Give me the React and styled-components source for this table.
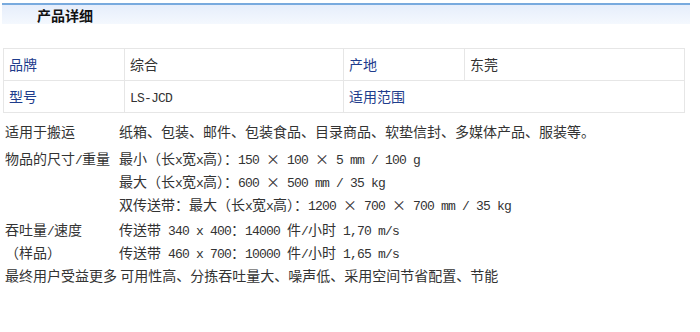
import React from "react";
import styled, { createGlobalStyle } from "styled-components";

const GlobalStyle = createGlobalStyle`
  body {
    margin: 0;
    background: #fff;
    font-family: "Noto Sans CJK SC", sans-serif;
    font-size: 14px;
    color: #333;
  }
`;

const Page = styled.div`
  width: 688px;
  padding: 3px 0 0 2px;
`;

const Header = styled.div`
  height: 19px;
  border-top: 2px solid #78aade;
  background: linear-gradient(#e6eefb, #f4f8fe);
  padding-left: 35px;
`;

const Title = styled.h3`
  margin: 0;
  font-size: 14px;
  line-height: 21px;
  font-weight: bold;
  color: #111;
`;

const Table = styled.table`
  margin: 24px 0 0 1px;
  width: 681px;
  border-collapse: collapse;
  table-layout: fixed;
`;

const Cell = styled.td`
  border: 1px solid #e6e6e6;
  height: 30px;
  padding: 0 0 1px 5px;
  line-height: 29px;
  color: ${(p) => (p.$label ? "#1e3c8c" : "#333")};
`;

const Num = styled.span`
  font-family: "Liberation Mono", monospace;
  font-size: 13px;
  letter-spacing: -0.8px;
  line-height: 1;
`;

const Specs = styled.div`
  margin-top: 7px;
  padding-left: 3px;
`;

const SpecRow = styled.div`
  display: grid;
  grid-template-columns: 114px 1fr;
  line-height: 23px;
  margin-top: ${(p) => p.$gap || 0}px;
`;

const Line = styled.div`
  white-space: nowrap;
`;

const Plain = styled.div`
  line-height: 23px;
  white-space: pre;
`;

export default function App() {
  return (
    <Page>
      <GlobalStyle />
      <Header>
        <Title>产品详细</Title>
      </Header>
      <Table>
        <colgroup>
          <col style={{ width: 121 }} />
          <col style={{ width: 219 }} />
          <col style={{ width: 121 }} />
          <col style={{ width: 220 }} />
        </colgroup>
        <tbody>
          <tr>
            <Cell $label>品牌</Cell>
            <Cell>综合</Cell>
            <Cell $label>产地</Cell>
            <Cell>东莞</Cell>
          </tr>
          <tr>
            <Cell $label>型号</Cell>
            <Cell>
              <Num>LS-JCD</Num>
            </Cell>
            <Cell $label colSpan={2}>
              适用范围
            </Cell>
          </tr>
        </tbody>
      </Table>
      <Specs>
        <SpecRow>
          <div>适用于搬运</div>
          <Line>纸箱、包装、邮件、包装食品、目录商品、软垫信封、多媒体产品、服装等。</Line>
        </SpecRow>
        <SpecRow $gap={4}>
          <div>
            物品的尺寸<Num>/</Num>重量
          </div>
          <div>
            <Line>
              最小（长<Num>x</Num>宽<Num>x</Num>高）：<Num>150 </Num>×<Num> 100 </Num>×
              <Num> 5 mm / 100 g</Num>
            </Line>
            <Line>
              最大（长<Num>x</Num>宽<Num>x</Num>高）：<Num>600 </Num>×<Num> 500 mm / 35 kg</Num>
            </Line>
            <Line>
              双传送带：最大（长<Num>x</Num>宽<Num>x</Num>高）：<Num>1200 </Num>×<Num> 700 </Num>×
              <Num> 700 mm / 35 kg</Num>
            </Line>
          </div>
        </SpecRow>
        <SpecRow $gap={2}>
          <div>
            <div>
              吞吐量<Num>/</Num>速度
            </div>
            <div>（样品）</div>
          </div>
          <div>
            <Line>
              传送带<Num> 340 x 400</Num>：<Num>14000 </Num>件<Num>/</Num>小时<Num> 1,70 m/s</Num>
            </Line>
            <Line>
              传送带<Num> 460 x 700</Num>：<Num>10000 </Num>件<Num>/</Num>小时<Num> 1,65 m/s</Num>
            </Line>
          </div>
        </SpecRow>
        <Plain>最终用户受益更多 可用性高、分拣吞吐量大、噪声低、采用空间节省配置、节能</Plain>
      </Specs>
    </Page>
  );
}
